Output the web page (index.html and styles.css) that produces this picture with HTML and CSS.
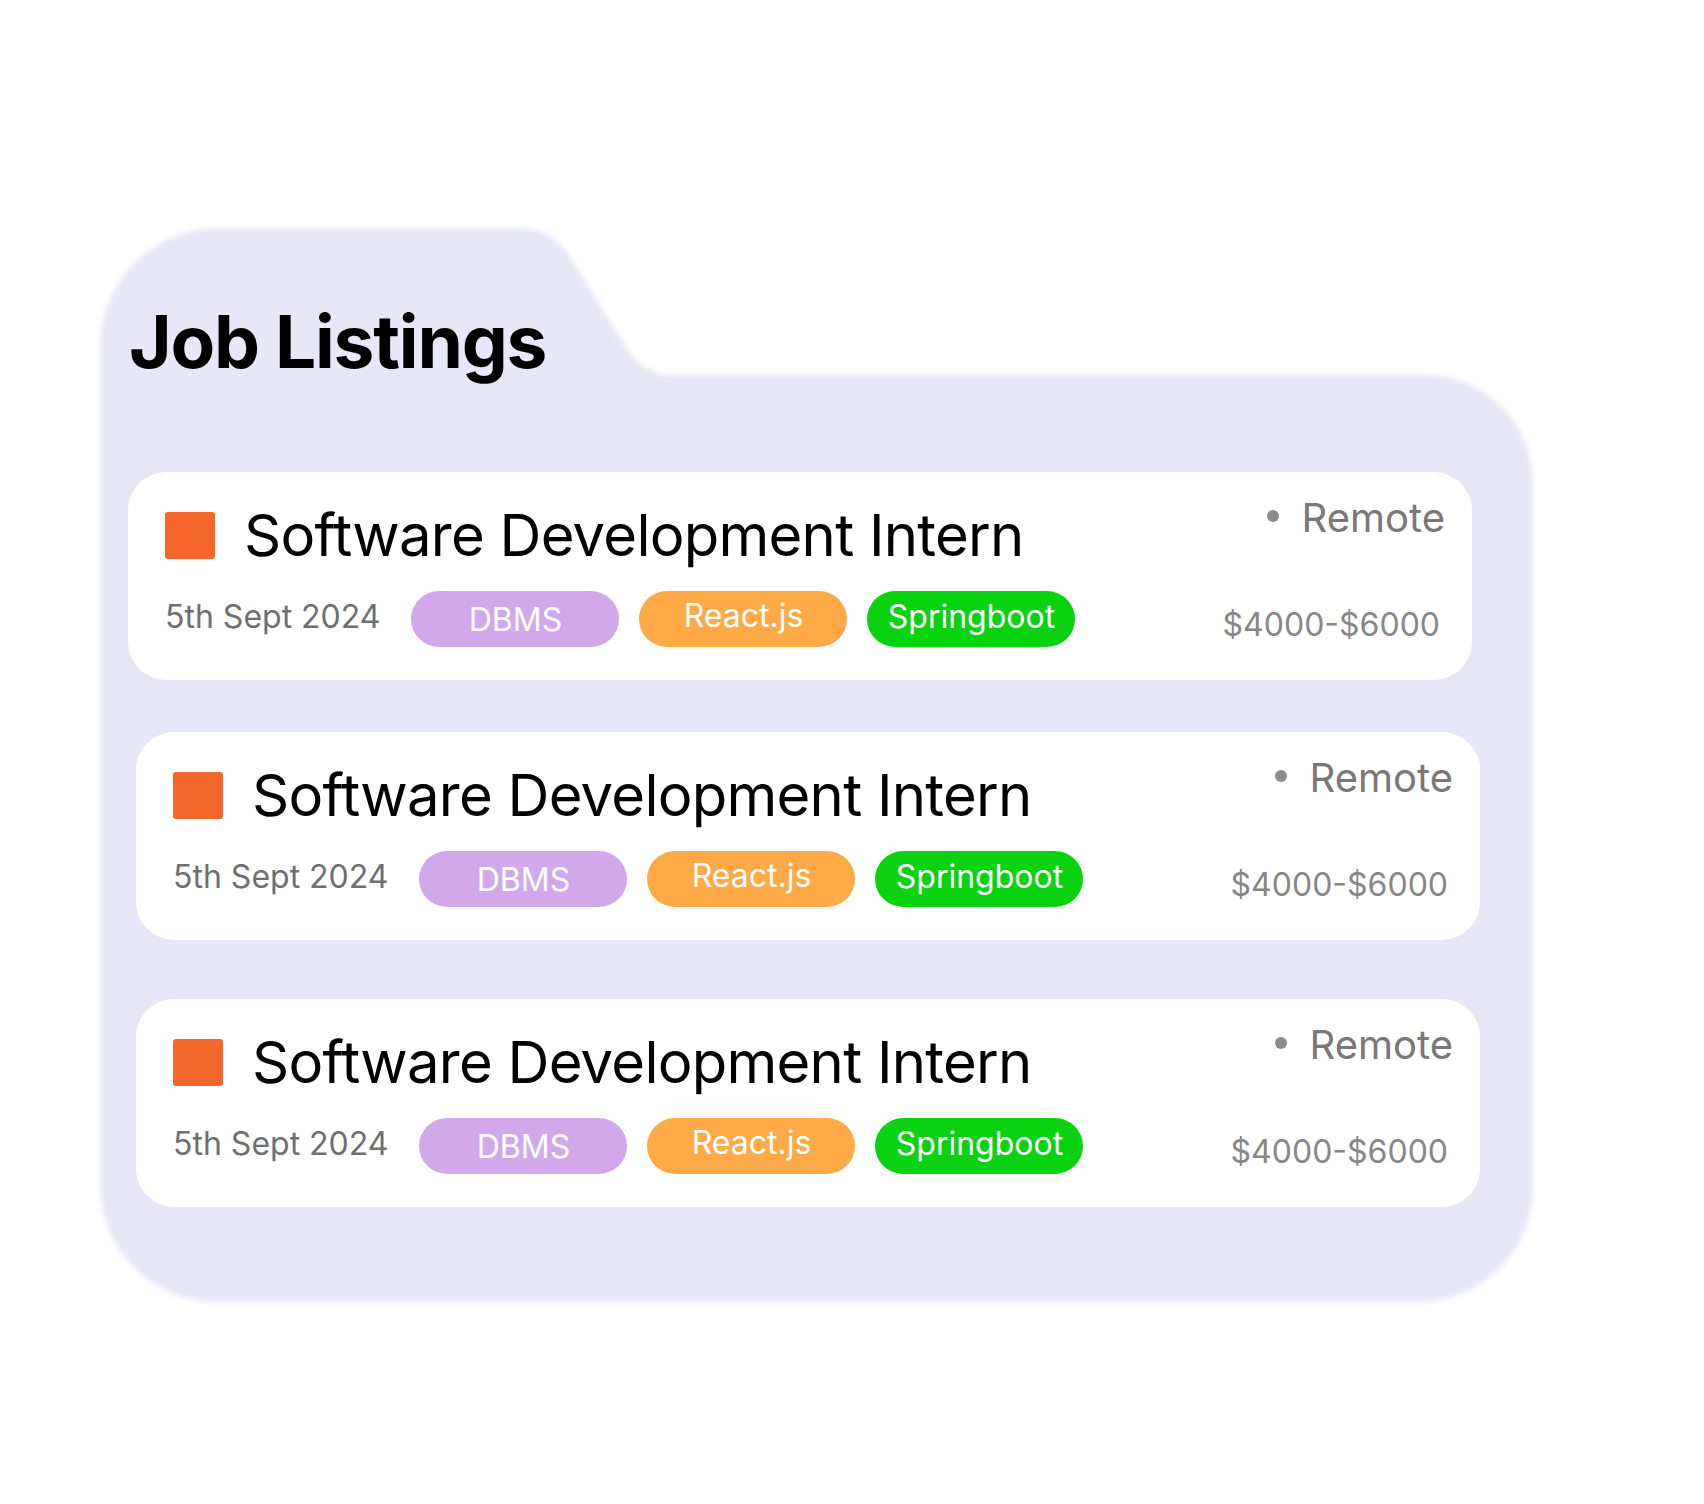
FILE: index.html
```html
<!DOCTYPE html>
<html lang="en">
<head>
<meta charset="utf-8">
<title>Job Listings</title>
<link rel="stylesheet" href="styles.css">
</head>
<body>
<main class="folder">
  <svg class="folder-shape" viewBox="0 0 1433 1074" width="1433" height="1074" aria-hidden="true">
    <defs>
      <filter id="soft" x="-5%" y="-5%" width="110%" height="110%">
        <feGaussianBlur stdDeviation="2.6"/>
      </filter>
    </defs>
    <path filter="url(#soft)" fill="#E8E7F8" d="M0,118 A118,118 0 0 1 118,0 L420,0 C460,0 470,30 497,72 C525,115 535,147 573,147 L1326,147 A107,107 0 0 1 1433,254 L1433,960 A114,114 0 0 1 1319,1074 L116,1074 A116,116 0 0 1 0,958 Z"/>
  </svg>

  <h1 class="folder-title">Job Listings</h1>

  <section class="job-list">
    <article class="job-card job-card--first">
      <div class="job-main">
        <div class="job-head">
          <span class="job-logo"></span>
          <h2 class="job-title">Software Development Intern</h2>
        </div>
        <div class="job-meta">
          <span class="job-date">5th Sept 2024</span>
          <span class="pill pill--dbms">DBMS</span>
          <span class="pill pill--react">React.js</span>
          <span class="pill pill--spring">Springboot</span>
        </div>
      </div>
      <div class="job-side">
        <span class="job-location"><span class="dot"></span>Remote</span>
        <span class="job-pay">$4000-$6000</span>
      </div>
    </article>

    <article class="job-card job-card--second">
      <div class="job-main">
        <div class="job-head">
          <span class="job-logo"></span>
          <h2 class="job-title">Software Development Intern</h2>
        </div>
        <div class="job-meta">
          <span class="job-date">5th Sept 2024</span>
          <span class="pill pill--dbms">DBMS</span>
          <span class="pill pill--react">React.js</span>
          <span class="pill pill--spring">Springboot</span>
        </div>
      </div>
      <div class="job-side">
        <span class="job-location"><span class="dot"></span>Remote</span>
        <span class="job-pay">$4000-$6000</span>
      </div>
    </article>

    <article class="job-card job-card--third">
      <div class="job-main">
        <div class="job-head">
          <span class="job-logo"></span>
          <h2 class="job-title">Software Development Intern</h2>
        </div>
        <div class="job-meta">
          <span class="job-date">5th Sept 2024</span>
          <span class="pill pill--dbms">DBMS</span>
          <span class="pill pill--react">React.js</span>
          <span class="pill pill--spring">Springboot</span>
        </div>
      </div>
      <div class="job-side">
        <span class="job-location"><span class="dot"></span>Remote</span>
        <span class="job-pay">$4000-$6000</span>
      </div>
    </article>
  </section>
</main>
</body>
</html>
```

FILE: styles.css
```css
* { box-sizing: border-box; }

html, body {
  margin: 0;
  padding: 0;
  background: #ffffff;
}

body {
  font-family: Inter, "Noto Sans", "Liberation Sans", sans-serif;
  color: #000;
  width: 1704px;
  height: 1504px;
  overflow: hidden;
}

.folder {
  position: relative;
  margin: 228px 0 0 100px;
  width: 1433px;
  height: 1074px;
  padding-top: 70px;
}

.folder-shape {
  position: absolute;
  left: 0;
  top: 0;
  overflow: visible;
  z-index: 0;
}

.folder-title {
  position: relative;
  margin: 0 0 0 29px;
  font-size: 73px;
  line-height: 1.2;
  font-weight: 700;
  letter-spacing: -1.2px;
}

.job-list {
  position: relative;
  display: flex;
  flex-direction: column;
  align-items: flex-start;
}

.job-card {
  width: 1344px;
  height: 208px;
  background: #ffffff;
  border-radius: 38px;
  display: flex;
  justify-content: space-between;
  padding: 0 27px 0 37px;
}

.job-card--first { margin: 86px 0 0 28px; }
.job-card--second { margin: 52px 0 0 36px; }
.job-card--third { margin: 59px 0 0 36px; }

.job-main {
  padding-top: 29px;
  display: flex;
  flex-direction: column;
  gap: 21px;
}

.job-head {
  display: flex;
  align-items: center;
  gap: 29px;
}

.job-logo {
  width: 50px;
  height: 47px;
  border-radius: 3px;
  background: #F5662C;
  flex: none;
}

.job-title {
  margin: 0;
  font-size: 58px;
  line-height: 1.2;
  font-weight: 400;
  letter-spacing: -0.75px;
}

.job-meta {
  display: flex;
  align-items: center;
  gap: 20px;
}

.job-date {
  font-size: 32px;
  line-height: 1.2;
  color: #6f6f6f;
  margin-right: 11px;
  margin-bottom: 3px;
}

.pill {
  width: 208px;
  height: 56px;
  border-radius: 28px;
  display: flex;
  align-items: center;
  justify-content: center;
  color: #ffffff;
  font-size: 32px;
  line-height: 1;
}

.pill--dbms { background: #D1A9EA; padding-top: 2px; }
.pill--react { background: #FFA947; padding-bottom: 7px; }
.pill--spring { background: #09D311; padding-bottom: 5px; }

.job-side {
  padding-top: 22px;
  display: flex;
  flex-direction: column;
  align-items: flex-end;
  gap: 64px;
}

.job-location {
  display: flex;
  align-items: center;
  gap: 22px;
  font-size: 40px;
  line-height: 1.2;
  color: #7a7777;
}

.dot {
  width: 12px;
  height: 12px;
  border-radius: 50%;
  background: #8d8a8a;
  margin-bottom: 4px;
}

.job-pay {
  font-size: 32px;
  line-height: 1.2;
  color: #878787;
  margin-right: 5px;
}
```
